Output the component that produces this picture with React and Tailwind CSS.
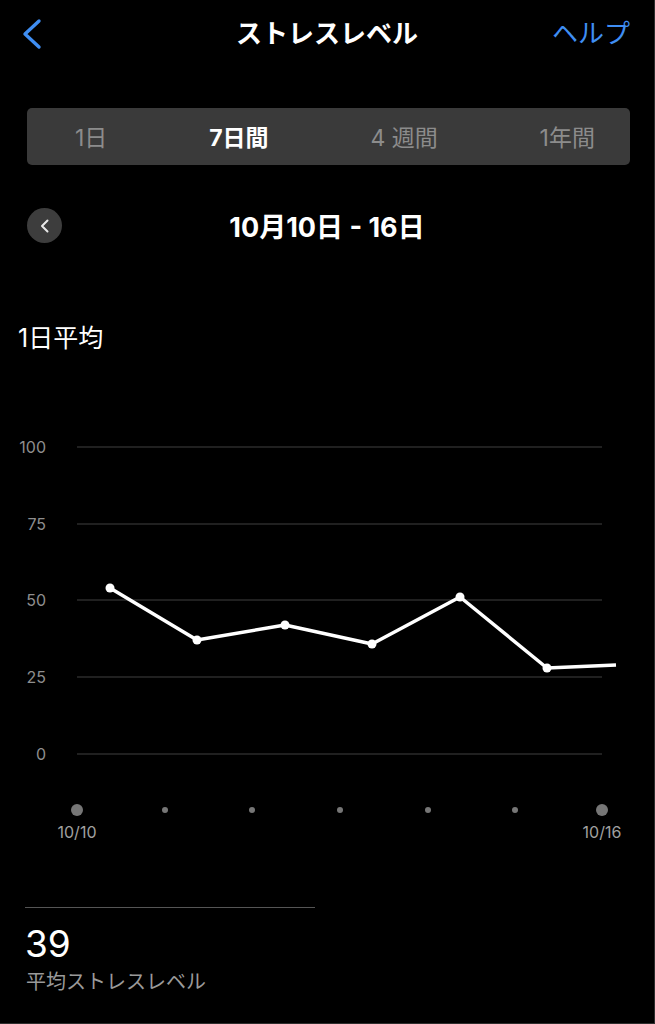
import React from "react";

const FONT = { fontFamily: '"Inter", "Noto Sans CJK JP", "Noto Sans", sans-serif' };

function Chart() {
  const grid = [
    { y: 47, l: "100" },
    { y: 124, l: "75" },
    { y: 200, l: "50" },
    { y: 277, l: "25" },
    { y: 354, l: "0" },
  ];
  const pts = [
    [110, 188],
    [197, 240],
    [285, 225],
    [372, 244],
    [460, 197],
    [547, 268],
  ];
  const line = [...pts, [616, 265]].map((p) => p.join(",")).join(" ");
  const small = [165, 252, 340, 428, 515];
  return (
    <svg width="655" height="460" viewBox="0 0 655 460" className="block" style={FONT}>
      {grid.map((g) => (
        <g key={g.l}>
          <line x1="77" x2="602" y1={g.y} y2={g.y} stroke="#2b2b2b" strokeWidth="1.5" />
          <text x="46" y={g.y + 5.5} textAnchor="end" fill="#8e8e8e" fontSize="16">
            {g.l}
          </text>
        </g>
      ))}
      <polyline points={line} fill="none" stroke="#ffffff" strokeWidth="3.5" strokeLinejoin="round" />
      {pts.map(([x, y]) => (
        <circle key={x} cx={x} cy={y} r="4.5" fill="#ffffff" />
      ))}
      <circle cx="77" cy="410" r="6" fill="#767676" />
      <circle cx="602" cy="410" r="6" fill="#767676" />
      {small.map((x) => (
        <circle key={x} cx={x} cy="410" r="3" fill="#767676" />
      ))}
      <text x="77" y="438" textAnchor="middle" fill="#a0a0a0" fontSize="16">
        10/10
      </text>
      <text x="602" y="438" textAnchor="middle" fill="#a0a0a0" fontSize="16">
        10/16
      </text>
    </svg>
  );
}

export default function App() {
  return (
    <div
      className="w-[655px] h-[1024px] bg-black text-white overflow-hidden border-r border-b border-[#2e2e2e] box-border"
      style={FONT}
    >
      {/* Header */}
      <div className="relative h-[68px] flex items-center justify-center">
        <svg className="absolute left-[18px] top-[17px]" width="28" height="34" viewBox="0 0 28 34">
          <path d="M21 4 L7 17 L21 30" fill="none" stroke="#3f8ef3" strokeWidth="3.4" strokeLinecap="round" strokeLinejoin="round" />
        </svg>
        <div className="text-[26px] font-bold leading-none">ストレスレベル</div>
        <div className="absolute right-[24px] top-[21px] text-[26px] leading-none text-[#3f8ef3]">ヘルプ</div>
      </div>

      {/* Segmented control */}
      <div className="mt-[40px] ml-[27px] mr-[24px] h-[57px] rounded-[5px] bg-[#3a3a3a] flex items-center justify-between pl-[48px] pr-[35px] pt-[4px] text-[23px] leading-none">
        <span className="text-[#8c8c8c]">1日</span>
        <span className="font-bold text-white">7日間</span>
        <span className="text-[#8c8c8c]">4 週間</span>
        <span className="text-[#8c8c8c]">1年間</span>
      </div>

      {/* Date row */}
      <div className="relative mt-[43px] h-[35px] flex items-center justify-center">
        <div className="absolute left-[27px] top-0 w-[35px] h-[35px] rounded-full bg-[#3d3d3d] flex items-center justify-center">
          <svg width="14" height="16" viewBox="0 0 14 16">
            <path d="M9.5 2.5 L4 8 L9.5 13.5" fill="none" stroke="#e8e8e8" strokeWidth="2" strokeLinecap="round" strokeLinejoin="round" />
          </svg>
        </div>
        <div className="pt-[3px] text-[27px] font-bold leading-none">10月10日 - 16日</div>
      </div>

      {/* Label */}
      <div className="mt-[79px] ml-[18px] h-[32px] text-[25px] leading-[32px]">1日平均</div>

      {/* Chart */}
      <div className="mt-[46px]">
        <Chart />
      </div>

      {/* Summary */}
      <div className="mt-[47px] ml-[25px] w-[290px] h-[1px] bg-[#555555]" />
      <div className="ml-[25px] mt-[16px] text-[37px] leading-[40px]">39</div>
      <div className="ml-[26px] mt-[4px] text-[20px] leading-[28px] text-[#9a9a9a]">平均ストレスレベル</div>
    </div>
  );
}
